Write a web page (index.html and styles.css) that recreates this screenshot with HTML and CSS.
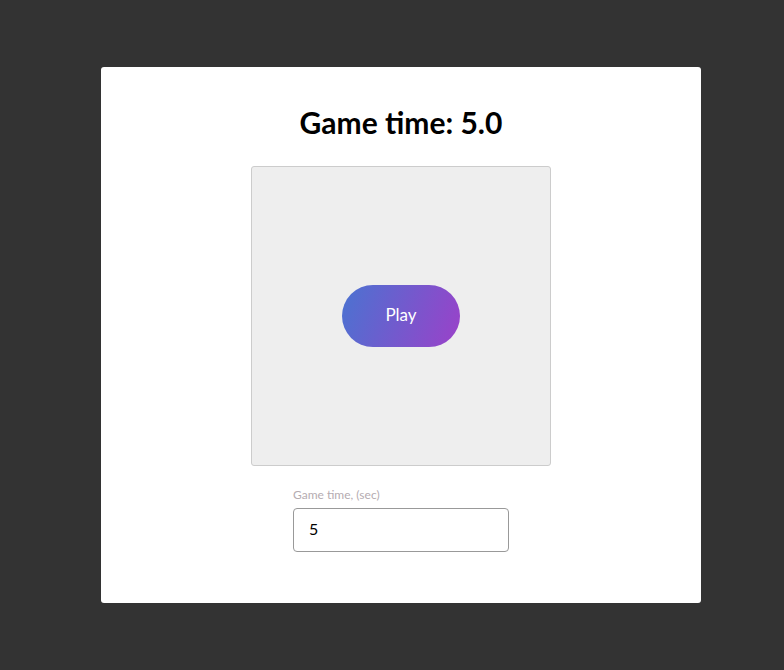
FILE: index.html
```html
<!DOCTYPE html>
<html>
<head>
<meta charset="utf-8">
<link rel="stylesheet" href="styles.css">
</head>
<body>
<div class="card">
  <h1 class="title">Game time: 5.0</h1>
  <div class="game">
    <button class="play">Play</button>
  </div>
  <div class="field">
    <label class="label" for="t">Game time, (sec)</label>
    <input class="input" id="t" type="text" value="5">
  </div>
</div>
</body>
</html>
```
FILE: styles.css
```css
html, body {
  margin: 0;
  padding: 0;
  background: #333333;
  font-family: Lato, "Open Sans", sans-serif;
}
body {
  width: 784px;
  height: 670px;
  padding: 67px 0 0 101px;
  box-sizing: border-box;
}
.card {
  width: 600px;
  height: 536px;
  box-sizing: border-box;
  background: #fff;
  border-radius: 3px;
  padding-top: 38px;
  display: flex;
  flex-direction: column;
  align-items: center;
}
.title {
  margin: 0;
  font-size: 30px;
  line-height: 35px;
  font-weight: 700;
  color: #000;
}
.game {
  margin-top: 26px;
  width: 300px;
  height: 300px;
  box-sizing: border-box;
  background: #eeeeee;
  border: 1px solid #cccccc;
  border-radius: 3px;
  display: flex;
  align-items: center;
  justify-content: center;
}
.play {
  width: 118px;
  height: 62px;
  border: none;
  border-radius: 31px;
  background: linear-gradient(110deg, #4a73d1 0%, #9b41c9 100%);
  color: #fff;
  font-family: Lato, sans-serif;
  font-size: 17px;
  padding: 0 0 4px 0;
}
.field {
  margin-top: 22px;
  width: 216px;
  display: flex;
  flex-direction: column;
}
.label {
  font-size: 12px;
  line-height: 14px;
  color: #b5acb1;
  margin-bottom: 6px;
}
.input {
  width: 216px;
  height: 44px;
  box-sizing: border-box;
  border: 1px solid #999999;
  border-radius: 4px;
  padding: 0 16px 4px 15px;
  font-family: Lato, sans-serif;
  font-size: 16px;
  color: #000;
  outline: none;
}
```
